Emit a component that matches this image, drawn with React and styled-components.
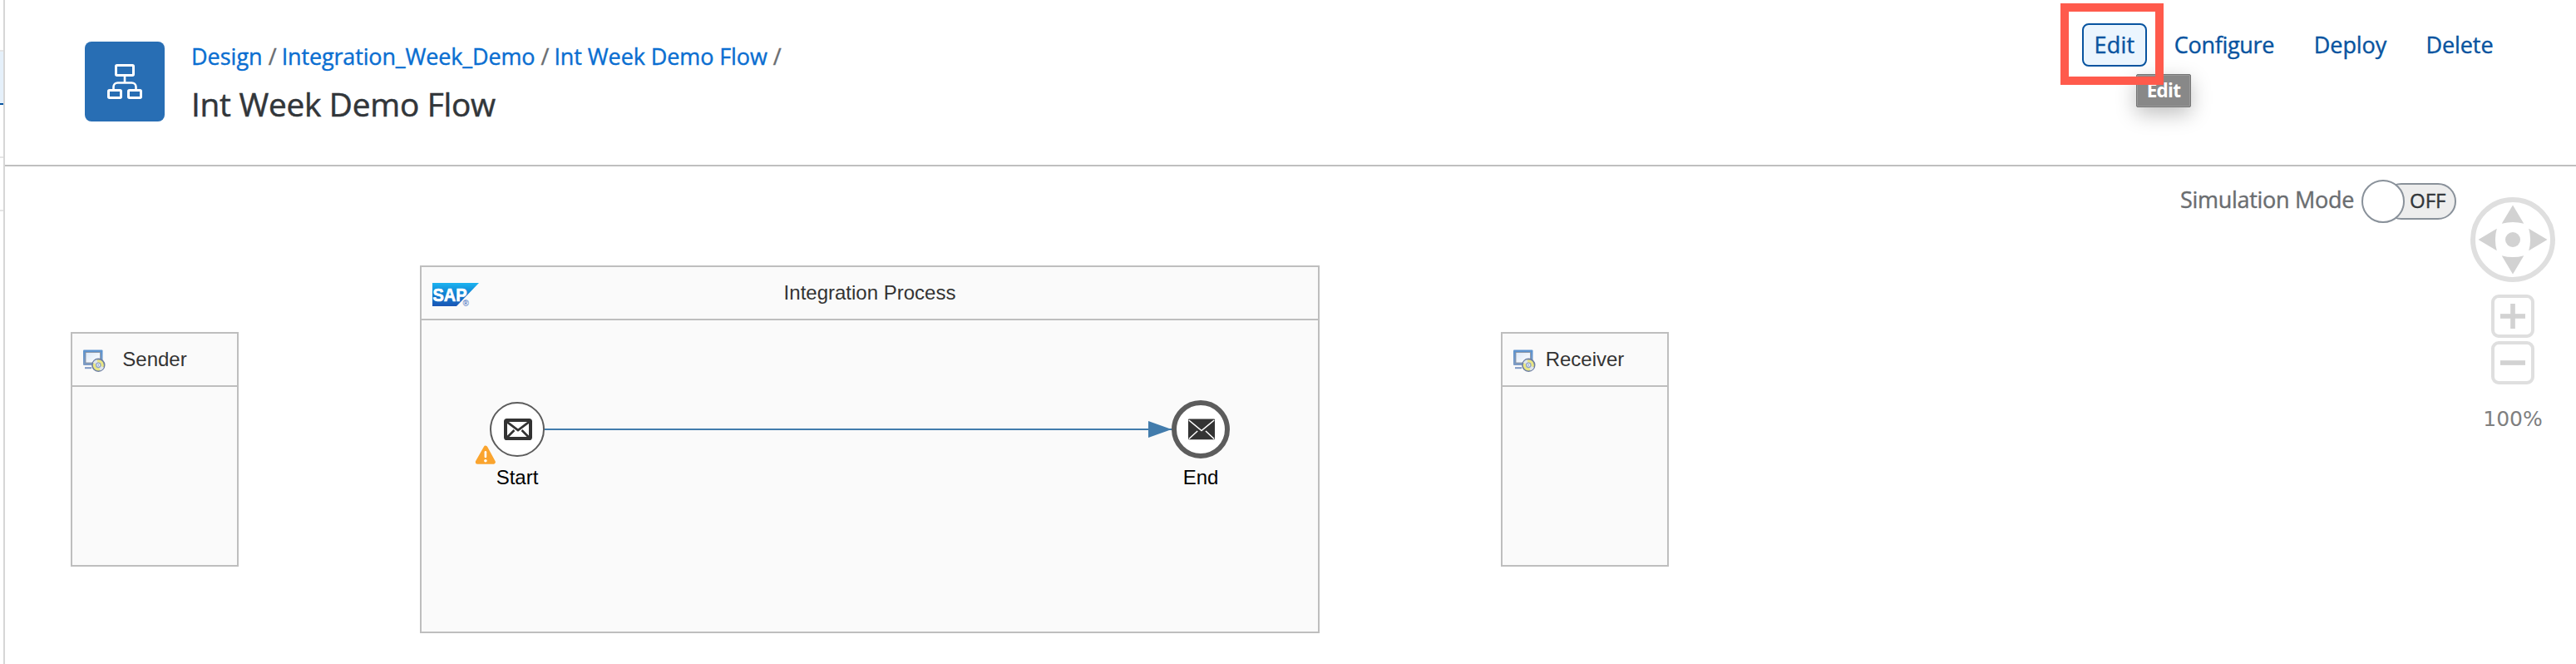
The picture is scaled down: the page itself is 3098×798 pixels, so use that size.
import React from "react";
import styled, { createGlobalStyle } from "styled-components";

const GlobalStyle = createGlobalStyle`
  * { box-sizing: border-box; }
  body { margin: 0; background: #fff; font-family: "Open Sans", "Noto Sans", sans-serif; overflow: hidden; }
`;

const Page = styled.div`
  display: flex;
  width: 3098px;
  height: 798px;
  background: #fff;
`;

/* Left navigation, only its right edge is visible */
const SideList = styled.div`
  display: flex;
  flex-direction: column;
  flex: none;
  width: 6px;
  border-right: 2px solid #d6d6d6;
`;

const SideItem = styled.div`
  height: ${(p) => p.$height}px;
  background: ${(p) => (p.$selected ? "#e5f0fa" : "#fff")};
  border-bottom: 2px solid ${(p) => (p.$selected ? "#0854a0" : "#e5e5e5")};
`;

const Main = styled.main`
  flex: 1;
  display: flex;
  flex-direction: column;
`;

const Header = styled.header`
  flex: none;
  display: flex;
  align-items: flex-start;
  height: 200px;
  padding-left: 96px;
  padding-right: 83px;
  border-bottom: 2px solid #bfbfbf;
`;

const Tile = styled.div`
  display: flex;
  align-items: center;
  justify-content: center;
  width: 96px;
  height: 96px;
  margin-top: 50px;
  border-radius: 8px;
  background: #286eb4;
`;

const Titles = styled.div`
  flex: 1;
  padding: 49px 0 0 32px;
`;

const Breadcrumb = styled.nav`
  display: flex;
  align-items: center;
  height: 38px;
  font-size: 27px;
  line-height: 38px;
  white-space: nowrap;
  -webkit-text-stroke: 0.4px;
`;

const Crumb = styled.a`
  color: #0a6ed1;
  letter-spacing: ${(p) => p.$spacing || 0}px;
`;

const Slash = styled.span`
  width: 10px;
  margin: 0 6px 0 7px;
  color: #6a6d70;
`;

const Title = styled.h1`
  margin: 11px 0 0;
  font-size: 38.8px;
  line-height: 54px;
  font-weight: 400;
  letter-spacing: -0.28px;
  color: #32363a;
  -webkit-text-stroke: 0.5px;
`;

const Actions = styled.div`
  display: flex;
  gap: 16px;
  margin-top: 28px;
`;

const ActionWrap = styled.div`
  position: relative;
`;

const ActionButton = styled.button`
  width: ${(p) => p.$width}px;
  height: 52px;
  padding: 0;
  border: 2px solid ${(p) => (p.$active ? "#0854a0" : "transparent")};
  border-radius: 8px;
  background: ${(p) => (p.$active ? "#ebf5fe" : "transparent")};
  color: #0854a0;
  font-family: inherit;
  font-size: 27px;
  line-height: 48px;
  letter-spacing: ${(p) => p.$spacing || 0}px;
  text-align: center;
  -webkit-text-stroke: 0.4px;
`;

const Tooltip = styled.div`
  position: absolute;
  left: 65px;
  top: 61px;
  width: 66px;
  height: 40px;
  border: 1px solid #757575;
  border-radius: 2px;
  background: #888;
  box-shadow: inset 0 0 0 1px #999, 0 8px 24px rgba(0, 0, 0, 0.25);
  color: #fff;
  font-size: 22.5px;
  font-weight: 700;
  line-height: 37px;
  letter-spacing: -0.7px;
  text-align: center;
`;

const Highlight = styled.div`
  position: absolute;
  left: -26px;
  top: -24px;
  width: 124px;
  height: 98px;
  border: 10px solid #ff5a4c;
`;

const Canvas = styled.section`
  position: relative;
  flex: 1;
  background: #fff;
`;

const CanvasTools = styled.div`
  display: flex;
  justify-content: flex-end;
  align-items: flex-start;
  gap: 17px;
  padding-right: 25px;
`;

const Simulation = styled.div`
  display: flex;
  align-items: center;
  height: 52px;
  margin-top: 16px;
`;

const SimulationLabel = styled.span`
  margin-right: 9px;
  padding-bottom: 5px;
  font-size: 27px;
  letter-spacing: -0.3px;
  color: #6a6d70;
  -webkit-text-stroke: 0.4px;
`;

const Switch = styled.div`
  display: flex;
  align-items: center;
  width: 114px;
  height: 52px;
`;

const Knob = styled.div`
  z-index: 1;
  width: 52px;
  height: 52px;
  border: 2px solid #89919a;
  border-radius: 50%;
  background: #fff;
`;

const Track = styled.div`
  width: 88px;
  height: 44px;
  margin-left: -26px;
  padding-left: 30px;
  border: 2px solid #89919a;
  border-radius: 22px;
  background: #ededed;
  color: #32363a;
  font-size: 24px;
  line-height: 38px;
  -webkit-text-stroke: 0.4px;
`;

const Navigator = styled.div`
  display: flex;
  flex-direction: column;
  align-items: center;
  width: 102px;
  margin-top: 37px;
`;

const ZoomButton = styled.div`
  display: flex;
  align-items: center;
  justify-content: center;
  width: 52px;
  height: 52px;
  margin-top: ${(p) => p.$gap}px;
  border: 4px solid #dfdfdf;
  border-radius: 9px;
`;

const ZoomLevel = styled.div`
  margin-top: 26px;
  font-family: "DejaVu Sans", sans-serif;
  font-size: 25px;
  line-height: 32px;
  color: #7f7f7f;
`;

const Pool = styled.div`
  position: absolute;
  left: ${(p) => p.$x}px;
  top: ${(p) => p.$y}px;
  width: ${(p) => p.$w}px;
  height: ${(p) => p.$h}px;
  border: 2px solid #bebebe;
  background: #fafafa;
`;

const PoolHeader = styled.div`
  position: relative;
  display: flex;
  align-items: center;
  justify-content: center;
  height: 64px;
  border-bottom: 2px solid #bebebe;
  font-family: "Liberation Sans", Arial, sans-serif;
  font-size: 24px;
  color: #333;
`;

const PoolIcon = styled.span`
  position: absolute;
  left: ${(p) => p.$left || 13}px;
  top: 19px;
  line-height: 0;
`;

const Flow = styled.svg`
  position: absolute;
  left: 649px;
  top: 305px;
`;

const EventNode = styled.div`
  position: absolute;
  left: ${(p) => p.$cx - 50}px;
  top: ${(p) => p.$cy - p.$r}px;
  width: 100px;
  display: flex;
  flex-direction: column;
  align-items: center;
`;

const EventCircle = styled.div`
  display: flex;
  align-items: center;
  justify-content: center;
  width: ${(p) => p.$r * 2}px;
  height: ${(p) => p.$r * 2}px;
  padding-left: 2px;
  border: ${(p) => p.$stroke}px solid #5c5c5c;
  border-radius: 50%;
  background: #fff;
`;

const EventLabel = styled.div`
  margin-top: ${(p) => p.$gap}px;
  font-family: "Liberation Sans", Arial, sans-serif;
  font-size: 24px;
  line-height: 28px;
  color: #000;
`;

const WarningBadge = styled.span`
  position: absolute;
  left: -1px;
  top: 52px;
  line-height: 0;
`;

const FlowIcon = () => (
  <svg width="42" height="42" viewBox="0 0 42 42" fill="none" stroke="#fff" strokeWidth="3">
    <rect x="10.5" y="1.5" width="21" height="12" rx="1.2" />
    <rect x="1.5" y="31.5" width="15" height="9" rx="1.2" />
    <rect x="25.5" y="31.5" width="15" height="9" rx="1.2" />
    <path d="M21 13.5V22.5M7.5 31v-3.5a5 5 0 0 1 5-5h17a5 5 0 0 1 5 5V31" strokeWidth="2.6" />
  </svg>
);

const SapLogo = () => (
  <svg width="56" height="32" viewBox="0 0 56 32" overflow="visible">
    <defs>
      <linearGradient id="sap" x1="0" y1="0" x2="0" y2="1">
        <stop offset="0" stopColor="#1cb4f0" />
        <stop offset="0.45" stopColor="#1184d4" />
        <stop offset="1" stopColor="#1a55b4" />
      </linearGradient>
    </defs>
    <path d="M0 0H56L29 28H0Z" fill="url(#sap)" />
    <text x="0.5" y="22.3" fill="#fff" stroke="#fff" strokeWidth="0.7" fontFamily="Liberation Sans, Arial, sans-serif" fontWeight="700" fontSize="22" textLength="41" lengthAdjust="spacingAndGlyphs">SAP</text>
    <text x="36.5" y="28" fill="#5a7fc4" fontFamily="Liberation Sans, Arial, sans-serif" fontWeight="700" fontSize="10">®</text>
  </svg>
);

const SystemIcon = () => (
  <svg width="28" height="28" viewBox="0 0 28 28">
    <defs>
      <linearGradient id="frame" x1="0" y1="0" x2="0" y2="1">
        <stop offset="0" stopColor="#5b93d0" />
        <stop offset="1" stopColor="#7f9cc4" />
      </linearGradient>
      <linearGradient id="screen" x1="0" y1="0" x2="1" y2="1">
        <stop offset="0" stopColor="#dbe8f8" />
        <stop offset="1" stopColor="#fff" />
      </linearGradient>
    </defs>
    <rect x="1" y="0.5" width="23.5" height="18.5" rx="1" fill="url(#frame)" />
    <rect x="4" y="3.5" width="17.5" height="12.5" fill="url(#screen)" stroke="#8a9099" strokeWidth="0.8" />
    <path d="M3 22.2H11" stroke="#7d98c4" strokeWidth="2" />
    <circle cx="19.3" cy="18.8" r="7.4" fill="#e9e684" stroke="#6c7ea3" strokeWidth="1.6" />
    <path d="M19.3 18.8L12.8 16A7 7 0 0 1 17.5 12ZM19.3 18.8L26 21.5A7 7 0 0 1 21.5 25.5Z" fill="#dfe5ea" />
    <circle cx="19.3" cy="18.8" r="2.7" fill="#e8eef8" stroke="#8fa3c8" strokeWidth="1.3" />
    <circle cx="19.3" cy="18.8" r="0.8" fill="#7189b8" />
  </svg>
);

const MailOutline = () => (
  <svg width="34" height="26" viewBox="0 0 34 26" fill="none" stroke="#333" strokeWidth="3.8">
    <rect x="2" y="2" width="30" height="22" rx="1.6" strokeWidth="4" />
    <path d="M3 3.5L17 14L31 3.5" strokeWidth="2.8" />
    <path d="M3.5 23L12.5 14M30.5 23L21.5 14" strokeWidth="2.6" />
  </svg>
);

const MailSolid = () => (
  <svg width="34" height="26" viewBox="0 0 34 26">
    <rect x="1" y="0.6" width="32" height="24.6" rx="1" fill="#333" />
    <g fill="none" stroke="#fff" strokeWidth="1.5">
      <path d="M1.8 2L17 14.5L32.2 2" />
      <path d="M1.8 24.5L12.2 15M32.2 24.5L22 15" />
    </g>
  </svg>
);

const WarningIcon = () => (
  <svg width="26" height="24" viewBox="0 0 26 24">
    <path d="M13 3.2L22.3 20.3H3.3Z" fill="#faa42e" stroke="#faa42e" strokeWidth="5" strokeLinejoin="round" />
    <path d="M12.9 8.3V14" stroke="#fff" strokeWidth="2.6" strokeLinecap="round" />
    <circle cx="12.9" cy="18.8" r="1.8" fill="#fff" />
  </svg>
);

const Compass = () => (
  <svg width="102" height="102" viewBox="-51 -51 102 102">
    <circle r="48" fill="none" stroke="#dfdfdf" strokeWidth="6" />
    <circle r="9" fill="#d2d2d2" />
    {[0, 90, 180, 270].map((angle) => (
      <path
        key={angle}
        transform={`rotate(${angle})`}
        d="M0 -41.5L13.3 -19.2Q0 -23 -13.3 -19.2Z"
        fill="#d2d2d2"
      />
    ))}
  </svg>
);

const PlusMinus = ({ plus }) => (
  <svg width="30" height="30" viewBox="0 0 30 30" fill="#d2d2d2">
    <rect y="12.2" width="30" height="5.6" />
    {plus && <rect x="12.2" width="5.6" height="30" />}
  </svg>
);

export default function App() {
  return (
    <>
      <GlobalStyle />
      <Page>
        <SideList>
          <SideItem $height={62} />
          <SideItem $height={64} $selected />
          <SideItem $height={64} />
          <SideItem $height={64} />
        </SideList>
        <Main>
          <Header>
            <Tile>
              <FlowIcon />
            </Tile>
            <Titles>
              <Breadcrumb>
                <Crumb>Design</Crumb>
                <Slash>/</Slash>
                <Crumb $spacing={-0.15}>Integration_Week_Demo</Crumb>
                <Slash>/</Slash>
                <Crumb $spacing={-0.1}>Int Week Demo Flow</Crumb>
                <Slash>/</Slash>
              </Breadcrumb>
              <Title>Int Week Demo Flow</Title>
            </Titles>
            <Actions>
              <ActionWrap>
                <ActionButton $width={78} $active $spacing={0.2}>Edit</ActionButton>
                <Tooltip>Edit</Tooltip>
                <Highlight />
              </ActionWrap>
              <ActionButton $width={154} $spacing={-0.3}>Configure</ActionButton>
              <ActionButton $width={117} $spacing={-0.1}>Deploy</ActionButton>
              <ActionButton $width={114} $spacing={-0.1}>Delete</ActionButton>
            </Actions>
          </Header>
          <Canvas>
            <CanvasTools>
              <Simulation>
                <SimulationLabel>Simulation Mode</SimulationLabel>
                <Switch>
                  <Knob />
                  <Track>OFF</Track>
                </Switch>
              </Simulation>
              <Navigator>
                <Compass />
                <ZoomButton $gap={15}>
                  <PlusMinus plus />
                </ZoomButton>
                <ZoomButton $gap={4}>
                  <PlusMinus />
                </ZoomButton>
                <ZoomLevel>100%</ZoomLevel>
              </Navigator>
            </CanvasTools>

            <Pool $x={79} $y={199} $w={202} $h={282}>
              <PoolHeader>
                <PoolIcon $left={12}><SystemIcon /></PoolIcon>
                Sender
              </PoolHeader>
            </Pool>
            <Pool $x={499} $y={119} $w={1082} $h={442}>
              <PoolHeader>
                <PoolIcon><SapLogo /></PoolIcon>
                Integration Process
              </PoolHeader>
            </Pool>
            <Pool $x={1799} $y={199} $w={202} $h={282}>
              <PoolHeader>
                <PoolIcon $left={12}><SystemIcon /></PoolIcon>
                Receiver
              </PoolHeader>
            </Pool>

            <Flow width="756" height="22" viewBox="0 0 756 22">
              <path d="M0 11H756" stroke="#427cac" strokeWidth="2" />
              <path d="M726 1L754 11L726 21Z" fill="#427cac" />
            </Flow>
            <EventNode $cx={616} $cy={316} $r={33}>
              <EventCircle $r={33} $stroke={2}>
                <MailOutline />
              </EventCircle>
              <EventLabel $gap={11}>Start</EventLabel>
              <WarningBadge><WarningIcon /></WarningBadge>
            </EventNode>
            <EventNode $cx={1438} $cy={316} $r={35}>
              <EventCircle $r={35} $stroke={6}>
                <MailSolid />
              </EventCircle>
              <EventLabel $gap={9}>End</EventLabel>
            </EventNode>
          </Canvas>
        </Main>
      </Page>
    </>
  );
}
